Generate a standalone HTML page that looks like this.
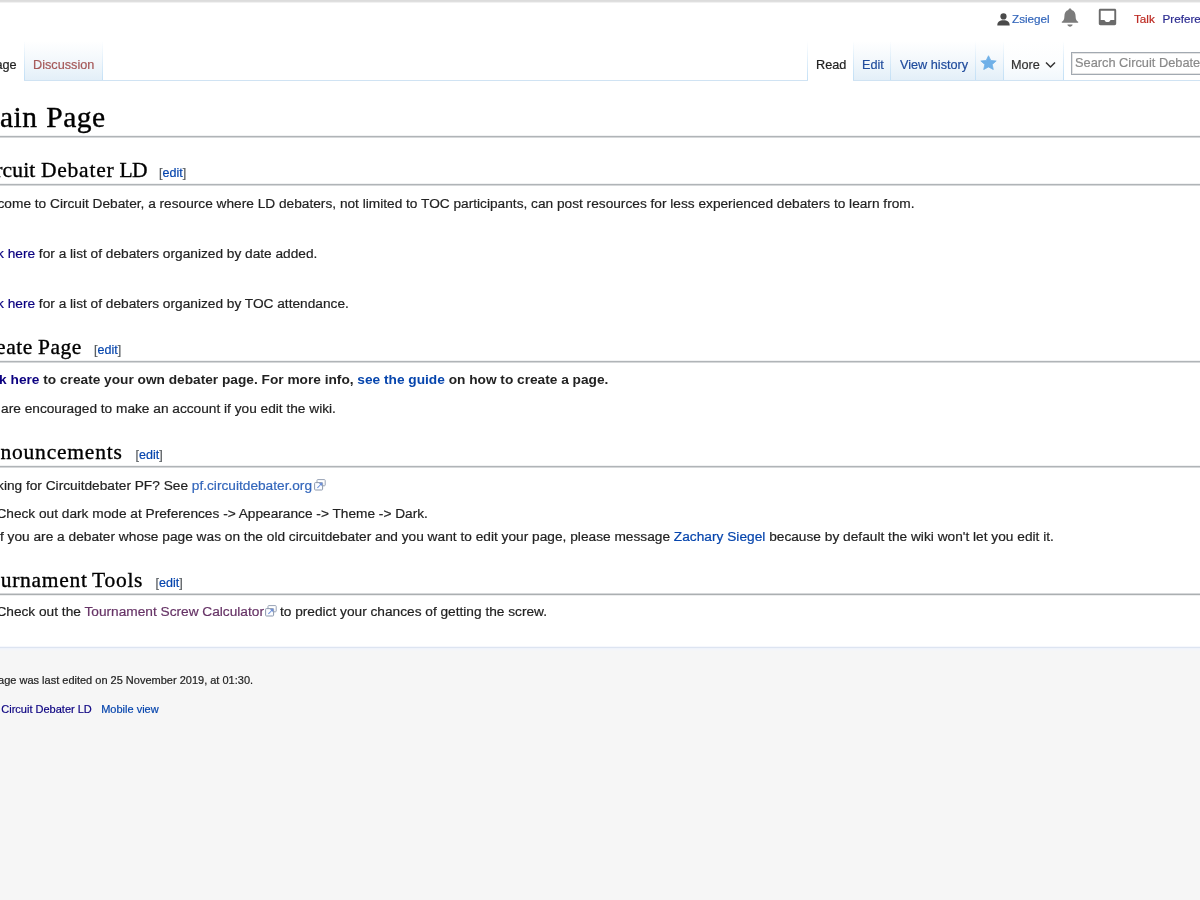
<!DOCTYPE html>
<html lang="en">
<head>
<meta charset="utf-8">
<title>Circuit Debater LD</title>
<style>
html,body{margin:0;padding:0;}
body{width:1200px;height:900px;overflow:hidden;position:relative;background:#f6f6f6;font-family:"Liberation Sans",Arial,Helvetica,sans-serif;color:#222;}
a{text-decoration:none;color:#0645ad;}
a.v{color:#0b0080;}
a.ext{color:#3366bb;}
a.extv{color:#663366;}
a.new{color:#bd2a22;}
#page{position:absolute;left:0;top:0;width:1200px;height:900px;filter:blur(0.5px);will-change:transform;}
#white{position:absolute;left:-20px;top:-20px;width:1240px;height:668px;background:#fff;}
#topband{position:absolute;left:-20px;top:-20px;width:1240px;height:23px;background:linear-gradient(#dcdcdc 0,#dcdcdc 21px,#dfdfdf 21px,#dfdfdf 22px,#f1f1f1 22px,#f1f1f1 23px);}
#footline{position:absolute;left:-20px;top:647px;width:1240px;height:1px;background:#dde4f1;box-shadow:0 1px 0 #eff3fa,0 2px 0 #f3f5fa,0 3px 0 #f5f6f8,0 -1px 0 #f6f8fd;}
.t{position:absolute;white-space:nowrap;margin:0;padding:0;-webkit-text-stroke:0.2px;}
.p{font-size:13.7px;line-height:22px;left:-25.8px;color:#222;}
.h1{font-family:"Liberation Serif","Times New Roman",serif;font-size:29.5px;line-height:36px;left:-26.8px;word-spacing:0.9px;letter-spacing:0.5px;color:#000;font-weight:400;-webkit-text-stroke:0.4px #000;}
.h2{left:0;width:400px;height:28px;font-family:"Liberation Serif","Times New Roman",serif;font-size:21.5px;line-height:28px;color:#000;font-weight:400;-webkit-text-stroke:0.35px #000;}
.h2 span{position:absolute;top:0;white-space:nowrap;}
.es{font-size:12.5px;line-height:18px;color:#54595d;}
.hr{position:absolute;left:-20px;width:1240px;height:1px;background:#b0b4b7;box-shadow:0 1px 0 #d6d8da,0 -1px 0 #f1f2f3;}
.f{font-size:11px;line-height:16px;color:#222;}
.tab{position:absolute;top:41px;height:39px;background:linear-gradient(#ffffff 0,#f3f8fc 50%,#e3eff8 100%);}
.tabsel{position:absolute;top:41px;height:40px;background:#fff;}
.vb{position:absolute;top:41px;width:1px;height:39px;background:linear-gradient(rgba(167,215,249,0) 0,#c3e0f6 100%);}
.bl{position:absolute;top:80px;height:1px;background:#d0e3f3;}
.tl{font-size:12.7px;line-height:20px;top:55px;}
.pl{font-size:11.7px;line-height:16px;top:11px;}
</style>
</head>
<body>
<div id="page">
<div id="white"></div>
<div id="topband"></div>

<!-- personal bar -->
<svg class="t" style="left:997px;top:13px" width="13" height="13" viewBox="0 0 13 13"><circle cx="6.5" cy="3.4" r="3.1" fill="#4a4a4a"/><path d="M0.3 12.6 C0.3 8.6 2.6 7.2 6.5 7.2 C10.4 7.2 12.7 8.6 12.7 12.6 Z" fill="#4a4a4a"/></svg>
<a class="t pl" style="left:1012px;color:#3366bb">Zsiegel</a>
<svg class="t" style="left:1061px;top:8px" width="18" height="19" viewBox="0 0 18 19"><path d="M9 0.6 C10 0.6 10.6 1.2 10.6 2.1 C13.4 2.9 14.6 5.2 14.6 8.2 C14.6 11.4 15.4 12.5 17.2 13.8 L17.2 14.8 L0.8 14.8 L0.8 13.8 C2.6 12.5 3.4 11.4 3.4 8.2 C3.4 5.2 4.6 2.9 7.4 2.1 C7.4 1.2 8 0.6 9 0.6 Z" fill="#7b7b7b"/><path d="M6.4 16.5 L11.6 16.5 C11.4 17.9 10.3 18.7 9 18.7 C7.7 18.7 6.6 17.9 6.4 16.5 Z" fill="#7b7b7b"/></svg>
<svg class="t" style="left:1098px;top:8px" width="19" height="18" viewBox="0 0 19 18"><path d="M2.4 0.8 L16.6 0.8 C17.6 0.8 18.2 1.4 18.2 2.4 L18.2 15.6 C18.2 16.6 17.6 17.2 16.6 17.2 L2.4 17.2 C1.4 17.2 0.8 16.6 0.8 15.6 L0.8 2.4 C0.8 1.4 1.4 0.8 2.4 0.8 Z M2.7 2.7 L2.7 12 L6.6 12 C6.8 13.4 7.9 14 9.5 14 C11.1 14 12.2 13.4 12.4 12 L16.3 12 L16.3 2.7 Z" fill="#6a6a6a" fill-rule="evenodd"/></svg>
<a class="t pl new" style="left:1134px">Talk</a>
<a class="t pl" style="left:1162.5px;color:#2a2a90">Preferences</a>

<!-- left tabs -->
<div class="tabsel" style="left:0;width:24px"></div>
<div class="tab" style="left:24px;width:78px"></div>
<div class="vb" style="left:24px"></div>
<div class="vb" style="left:102px"></div>
<div class="bl" style="left:24px;width:784px"></div>
<span class="t tl" style="left:-42.6px;color:#222">Main page</span>
<a class="t tl" style="left:33px;color:#a55858">Discussion</a>

<!-- right tabs -->
<div class="tab" style="left:808px;width:256px"></div>
<div class="tabsel" style="left:808px;width:45px"></div>
<div class="vb" style="left:807px"></div>
<div class="vb" style="left:853px"></div>
<div class="vb" style="left:890px"></div>
<div class="vb" style="left:975px"></div>
<div class="tab" style="left:1004px;width:59px;background:linear-gradient(#fff 0,#fbfdfe 60%,#f1f7fc 100%)"></div>
<div class="vb" style="left:1003px"></div>
<div class="vb" style="left:1063px"></div>
<div class="bl" style="left:853px;width:347px"></div>
<span class="t tl" style="left:816px;color:#222">Read</span>
<a class="t tl" style="left:862px;color:#1f4b9c">Edit</a>
<a class="t tl" style="left:900px;color:#1f4b9c">View history</a>
<svg class="t" style="left:980px;top:55px" width="17" height="15.2" viewBox="0 0 17 16" preserveAspectRatio="none"><path d="M8.5 0.8 L10.8 5.7 L16.2 6.3 L12.2 10 L13.3 15.3 L8.5 12.6 L3.7 15.3 L4.8 10 L0.8 6.3 L6.2 5.7 Z" fill="#6fb0e8" stroke="#6fb0e8" stroke-width="0.8" stroke-linejoin="round"/></svg>
<span class="t tl" style="left:1011px;color:#333">More</span>
<svg class="t" style="left:1045px;top:61px" width="11" height="8" viewBox="0 0 11 8"><path d="M1 1.5 L5.5 6 L10 1.5" fill="none" stroke="#333" stroke-width="1.5"/></svg>
<div class="t" style="left:1071px;top:51.5px;width:140px;height:23px;box-sizing:border-box;border:1px solid #a2a9b1;background:#fff;box-shadow:inset 0 0 0 1px #e4e4e4"></div>
<span class="t" style="left:1075px;top:54px;font-size:12.8px;line-height:18px;color:#8a8a8a">Search Circuit Debater LD</span>

<!-- content -->
<h1 class="t h1" style="top:99.4px">Main Page</h1>
<div class="hr" style="top:136px"></div>

<h2 class="t h2" style="top:156px"><span style="right:364.6px;letter-spacing:0.15px">Circuit</span> <span style="left:40.9px;letter-spacing:0.80px">Debater</span> <span style="left:119.6px;letter-spacing:-0.80px">LD</span></h2>
<span class="t es" style="left:159px;top:163.5px">[<a>edit</a>]</span>
<div class="hr" style="top:184px"></div>
<p class="t p" style="top:193px">Welcome to Circuit Debater, a resource where LD debaters, not limited to TOC participants, can post resources for less experienced debaters to learn from.</p>
<p class="t p" style="top:243px"><a class="v">Click here</a> for a list of debaters organized by date added.</p>
<p class="t p" style="top:293px"><a class="v">Click here</a> for a list of debaters organized by TOC attendance.</p>

<h2 class="t h2" style="top:333px"><span style="right:367.3px;letter-spacing:0.50px">Create</span> <span style="left:37.9px;letter-spacing:0.55px">Page</span></h2>
<span class="t es" style="left:94.1px;top:340.5px">[<a>edit</a>]</span>
<div class="hr" style="top:361px"></div>
<p class="t p" style="top:369.2px;left:-26px;font-weight:bold;-webkit-text-stroke:0"><a class="v">Click here</a> to create your own debater page. For more info, <a>see the guide</a> on how to create a page.</p>
<p class="t p" style="top:398px">You are encouraged to make an account if you edit the wiki.</p>

<h2 class="t h2" style="top:438px"><span style="right:277.3px;letter-spacing:0.80px">Announcements</span></h2>
<span class="t es" style="left:135.5px;top:445.5px">[<a>edit</a>]</span>
<div class="hr" style="top:466px"></div>
<p class="t p" style="top:474.5px">Looking for Circuitdebater PF? See <a class="ext">pf.circuitdebater.org</a></p>
<svg class="t" style="left:313.6px;top:478.6px" width="12" height="12" viewBox="0 0 12 12"><rect x="3" y="0.6" width="8.2" height="6.2" rx="0.8" fill="#fff" stroke="#98a3b6" stroke-width="1"/><rect x="0.6" y="3.6" width="8" height="7.4" rx="0.8" fill="#fafcff" stroke="#8d99ad" stroke-width="1"/><path d="M3 8.6 L6.2 5.4 L4.8 4.6 L8.6 3.4 L7.6 7.2 L6.9 6 L3.8 9.2 Z" fill="#6d8fd8"/></svg>
<p class="t p" style="top:502.5px;left:-3.6px">Check out dark mode at Preferences -&gt; Appearance -&gt; Theme -&gt; Dark.</p>
<p class="t p" style="top:525.5px;left:-3.9px;letter-spacing:0.012px">If you are a debater whose page was on the old circuitdebater and you want to edit your page, please message <a>Zachary Siegel</a> because by default the wiki won't let you edit it.</p>

<h2 class="t h2" style="top:566px"><span style="right:312.4px;letter-spacing:0.70px">Tournament</span> <span style="left:92.0px;letter-spacing:0.75px">Tools</span></h2>
<span class="t es" style="left:155.5px;top:573.5px">[<a>edit</a>]</span>
<div class="hr" style="top:594px;background:#abafb1;box-shadow:0 -1px 0 #d6d8da,0 1px 0 #edeeef"></div>
<p class="t p" style="top:601.2px;left:-3.6px">Check out the <a class="extv">Tournament Screw Calculator</a><span style="display:inline-block;width:16px"></span>to predict your chances of getting the screw.</p>

<svg class="t" style="left:264.8px;top:605.2px" width="12" height="12" viewBox="0 0 12 12"><rect x="3" y="0.6" width="8.2" height="6.2" rx="0.8" fill="#fff" stroke="#98a3b6" stroke-width="1"/><rect x="0.6" y="3.6" width="8" height="7.4" rx="0.8" fill="#fafcff" stroke="#8d99ad" stroke-width="1"/><path d="M3 8.6 L6.2 5.4 L4.8 4.6 L8.6 3.4 L7.6 7.2 L6.9 6 L3.8 9.2 Z" fill="#6d8fd8"/></svg>

<div id="footline"></div>
<span class="t f" style="left:-31.9px;top:672px">This page was last edited on 25 November 2019, at 01:30.</span>
<a class="t f" style="left:-30.5px;top:701px;color:#0b0080">About Circuit Debater LD</a>
<a class="t f" style="left:101.2px;top:701px;color:#0645ad">Mobile view</a>
</div>
</body>
</html>
